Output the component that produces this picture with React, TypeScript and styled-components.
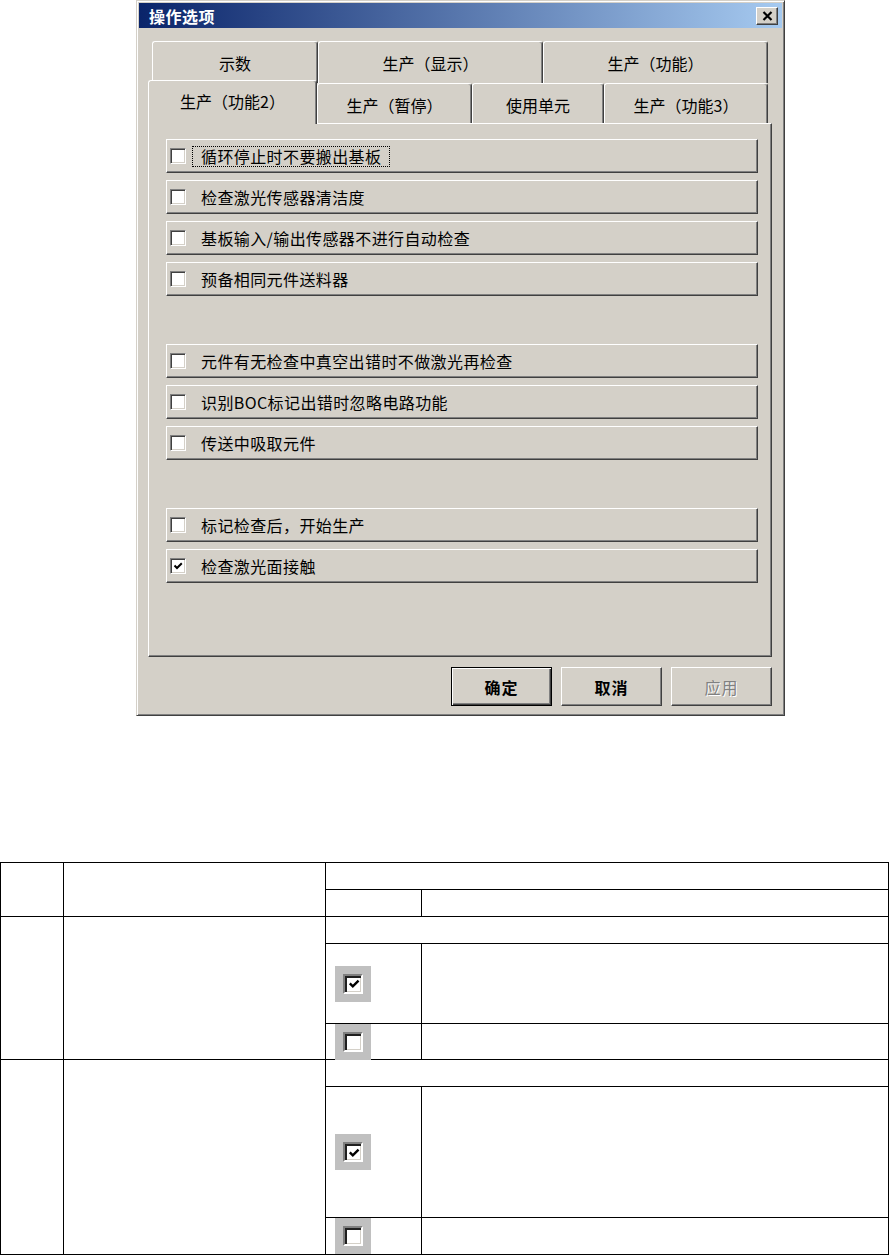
import styled, { createGlobalStyle } from "styled-components";

const GlobalStyle = createGlobalStyle`
  html, body {
    margin: 0;
    padding: 0;
    background: #fff;
  }
  body {
    font-family: "Noto Sans CJK SC", "Liberation Sans", sans-serif;
    color: #000;
  }
`;

const Page = styled.div`
  width: 889px;
  display: flex;
  flex-direction: column;
`;

const Dialog = styled.div`
  box-sizing: border-box;
  width: 649px;
  margin-left: 136px;
  background: #d4d0c8;
  border: 1px solid;
  border-color: #d4d0c8 #404040 #404040 #d4d0c8;
  box-shadow: inset 1px 1px #fff, inset -1px -1px #808080;
  padding: 2px 2px 9px;
  display: flex;
  flex-direction: column;
`;

const TitleBar = styled.div`
  height: 25px;
  display: flex;
  align-items: center;
  justify-content: space-between;
  padding: 0 4px 0 10px;
  background: linear-gradient(to right, #0a246a, #a6caf0);
  color: #fff;
  font-weight: bold;
  font-size: 16px;
  letter-spacing: 0.5px;
`;

const CloseButton = styled.div`
  box-sizing: border-box;
  width: 22px;
  height: 18px;
  background: #d4d0c8;
  border: 1px solid;
  border-color: #fff #404040 #404040 #fff;
  box-shadow: inset -1px -1px #808080;
  display: flex;
  align-items: center;
  justify-content: center;
`;

const Body = styled.div`
  padding: 13px 10px 0 9px;
  display: flex;
  flex-direction: column;
`;

const TabRow = styled.div<{ $front?: boolean; $indent?: number; $h: number }>`
  display: flex;
  align-items: flex-start;
  height: ${(p) => p.$h}px;
  margin-left: ${(p) => p.$indent ?? 0}px;
  position: ${(p) => (p.$front ? "relative" : "static")};
  z-index: ${(p) => (p.$front ? 2 : "auto")};
`;

const Tab = styled.div<{ $w: number; $h: number; $active?: boolean }>`
  box-sizing: border-box;
  flex: none;
  width: ${(p) => p.$w}px;
  height: ${(p) => (p.$active ? p.$h + 4 : p.$h)}px;
  margin-top: ${(p) => (p.$active ? -3 : 0)}px;
  background: #d4d0c8;
  border-top: 1px solid #fff;
  border-left: 1px solid #fff;
  border-right: 1px solid #404040;
  border-radius: 3px 3px 0 0;
  box-shadow: inset -1px 0 #808080;
  padding-top: ${(p) => (p.$active ? 10 : 11)}px;
  text-align: center;
  font-size: 16px;
  line-height: 20px;
  white-space: nowrap;
`;

const Panel = styled.div`
  box-sizing: border-box;
  height: 534px;
  border: 1px solid;
  border-color: #fff #404040 #404040 #fff;
  box-shadow: inset -1px -1px #808080;
  padding: 15px 13px 0 17px;
  display: flex;
  flex-direction: column;
  gap: 7px;
`;

const OptionRow = styled.div`
  box-sizing: border-box;
  height: 34px;
  border: 1px solid;
  border-color: #fff #404040 #404040 #fff;
  box-shadow: inset -1px -1px #808080;
  display: flex;
  align-items: center;
  padding-left: 3px;
`;

const Blank = styled.div`
  height: 34px;
`;

const CheckBox = styled.div`
  box-sizing: border-box;
  flex: none;
  width: 16px;
  height: 16px;
  background: #fff;
  border: 1px solid;
  border-color: #808080 #fff #fff #808080;
  box-shadow: inset 1px 1px #404040, inset -1px -1px #d4d0c8;
  display: flex;
  align-items: center;
  justify-content: center;
`;

const Label = styled.span<{ $focused?: boolean }>`
  margin-left: 6px;
  padding: 0 8px;
  border: 1px dotted ${(p) => (p.$focused ? "#000" : "transparent")};
  font-size: 16px;
  line-height: 19px;
  letter-spacing: 0.4px;
  white-space: nowrap;
`;

const ButtonBar = styled.div`
  display: flex;
  justify-content: flex-end;
  gap: 9px;
  margin-top: 10px;
`;

const Button = styled.div<{ $default?: boolean; $disabled?: boolean }>`
  box-sizing: border-box;
  width: 101px;
  height: 39px;
  display: flex;
  align-items: center;
  justify-content: center;
  font-size: 16px;
  letter-spacing: 1px;
  border: 1px solid;
  border-color: ${(p) => (p.$default ? "#000" : "#fff #404040 #404040 #fff")};
  box-shadow: ${(p) =>
    p.$default
      ? "inset 1px 1px #fff, inset -1px -1px #404040, inset -2px -2px #808080"
      : "inset -1px -1px #808080"};
  color: ${(p) => (p.$disabled ? "#808080" : "#000")};
  text-shadow: ${(p) => (p.$disabled ? "1px 1px #fff" : "none")};
  font-weight: ${(p) => (p.$disabled ? "normal" : "bold")};
`;

/* spec table below the screenshot: drawn as a grid so the ruled lines land exactly */
const SpecGrid = styled.div`
  margin-top: 146px;
  width: 889px;
  box-sizing: border-box;
  display: grid;
  grid-template-columns: 63px 262px 96px 467px;
  grid-template-rows: 27px 27px 27px 80px 36px 27px 131px 37px;
  border-left: 1px solid #000;
  border-top: 1px solid #000;
`;

const Cell = styled.div<{ $rowSpan?: number; $colSpan?: number; $shot?: boolean }>`
  box-sizing: border-box;
  grid-row: span ${(p) => p.$rowSpan ?? 1};
  grid-column: span ${(p) => p.$colSpan ?? 1};
  border-right: 1px solid #000;
  border-bottom: 1px solid #000;
  display: flex;
  align-items: center;
  padding-left: ${(p) => (p.$shot ? 9 : 0)}px;
`;

const Shot = styled.div`
  width: 36px;
  height: 36px;
  background: #c0c0c0;
  display: flex;
  align-items: center;
  justify-content: center;
`;

const ShotBox = styled.div`
  box-sizing: border-box;
  width: 20px;
  height: 20px;
  background: #fff;
  border: 2px solid;
  border-color: #808080 #fff #fff #808080;
  box-shadow: inset 2px 2px #202020, inset -1px -1px #d4d0c8;
  display: flex;
  align-items: center;
  justify-content: center;
  padding: 1px 0 0 1px;
`;

function CheckMark({ size }: { size: number }) {
  return (
    <svg width={size} height={size} viewBox="0 0 10 10">
      <path d="M1.5 4.5 L4 7 L8.8 2.2" fill="none" stroke="#000" strokeWidth="2" />
    </svg>
  );
}

function CloseGlyph() {
  return (
    <svg width="11" height="10" viewBox="0 0 11 10">
      <path d="M1.5 1 L9.5 9 M9.5 1 L1.5 9" stroke="#000" strokeWidth="2.2" />
    </svg>
  );
}

const topTabs = [
  { label: "示数", w: 166 },
  { label: "生产（显示）", w: 225 },
  { label: "生产（功能）", w: 225 },
];

const frontTabs = [
  { label: "生产（功能2）", w: 169, active: true },
  { label: "生产（暂停）", w: 155 },
  { label: "使用单元", w: 132 },
  { label: "生产（功能3）", w: 164 },
];

type Option = { label: string; checked?: boolean; focused?: boolean } | null;

const options: Option[] = [
  { label: "循环停止时不要搬出基板", focused: true },
  { label: "检查激光传感器清洁度" },
  { label: "基板输入/输出传感器不进行自动检查" },
  { label: "预备相同元件送料器" },
  null,
  { label: "元件有无检查中真空出错时不做激光再检查" },
  { label: "识别BOC标记出错时忽略电路功能" },
  { label: "传送中吸取元件" },
  null,
  { label: "标记检查后，开始生产" },
  { label: "检查激光面接触", checked: true },
];

function ShotCheck({ checked }: { checked?: boolean }) {
  return (
    <Shot>
      <ShotBox>{checked && <CheckMark size={12} />}</ShotBox>
    </Shot>
  );
}

function SpecGroup() {
  return (
    <>
      <Cell $rowSpan={3} />
      <Cell $rowSpan={3} />
      <Cell $colSpan={2} />
      <Cell $shot>
        <ShotCheck checked />
      </Cell>
      <Cell />
      <Cell $shot>
        <ShotCheck />
      </Cell>
      <Cell />
    </>
  );
}

export default function App() {
  return (
    <Page>
      <GlobalStyle />
      <Dialog>
        <TitleBar>
          <span>操作选项</span>
          <CloseButton>
            <CloseGlyph />
          </CloseButton>
        </TitleBar>
        <Body>
          <TabRow $indent={4} $h={42}>
            {topTabs.map((t) => (
              <Tab key={t.label} $w={t.w} $h={42}>
                {t.label}
              </Tab>
            ))}
          </TabRow>
          <TabRow $front $h={40}>
            {frontTabs.map((t) => (
              <Tab key={t.label} $w={t.w} $h={40} $active={t.active}>
                {t.label}
              </Tab>
            ))}
          </TabRow>
          <Panel>
            {options.map((o, i) =>
              o ? (
                <OptionRow key={i}>
                  <CheckBox>{o.checked && <CheckMark size={10} />}</CheckBox>
                  <Label $focused={o.focused}>{o.label}</Label>
                </OptionRow>
              ) : (
                <Blank key={i} />
              )
            )}
          </Panel>
          <ButtonBar>
            <Button $default>确定</Button>
            <Button>取消</Button>
            <Button $disabled>应用</Button>
          </ButtonBar>
        </Body>
      </Dialog>

      <SpecGrid>
        <Cell $rowSpan={2} />
        <Cell $rowSpan={2} />
        <Cell $colSpan={2} />
        <Cell />
        <Cell />
        <SpecGroup />
        <SpecGroup />
      </SpecGrid>
    </Page>
  );
}
